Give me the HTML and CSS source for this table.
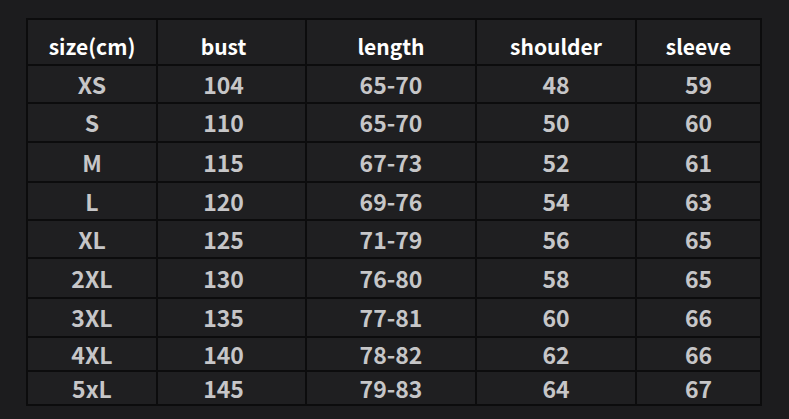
FILE: index.html
```html
<!DOCTYPE html>
<html>
<head>
<meta charset="utf-8">
<link rel="stylesheet" href="styles.css">
</head>
<body>
<div class="page">
<table class="chart">
  <colgroup>
    <col class="c1"><col class="c2"><col class="c3"><col class="c4"><col class="c5">
  </colgroup>
  <thead>
    <tr class="head"><th>size(cm)</th><th class="bust">bust</th><th>length</th><th>shoulder</th><th>sleeve</th></tr>
  </thead>
  <tbody>
    <tr class="r1"><td>XS</td><td class="bust">104</td><td>65-70</td><td>48</td><td>59</td></tr>
    <tr class="r2"><td>S</td><td class="bust">110</td><td>65-70</td><td>50</td><td>60</td></tr>
    <tr class="r3"><td>M</td><td class="bust">115</td><td>67-73</td><td>52</td><td>61</td></tr>
    <tr class="r4"><td>L</td><td class="bust">120</td><td>69-76</td><td>54</td><td>63</td></tr>
    <tr class="r5"><td>XL</td><td class="bust">125</td><td>71-79</td><td>56</td><td>65</td></tr>
    <tr class="r6"><td>2XL</td><td class="bust">130</td><td>76-80</td><td>58</td><td>65</td></tr>
    <tr class="r7"><td>3XL</td><td class="bust">135</td><td>77-81</td><td>60</td><td>66</td></tr>
    <tr class="r8"><td>4XL</td><td class="bust">140</td><td>78-82</td><td>62</td><td>66</td></tr>
    <tr class="r9"><td>5xL</td><td class="bust">145</td><td>79-83</td><td>64</td><td>67</td></tr>
  </tbody>
</table>
</div>
</body>
</html>
```

FILE: styles.css
```css
html, body {
  margin: 0;
  padding: 0;
  background: #1c1c1e;
  width: 789px;
  height: 419px;
  overflow: hidden;
}
.page {
  padding: 18px 0 0 26px;
}
.chart {
  border-collapse: collapse;
  table-layout: fixed;
  width: 734px;
  background: #1f1f21;
  font-family: "Noto Sans CJK SC", "Noto Sans", sans-serif;
  font-weight: 700;
}
.chart th, .chart td {
  border: 2px solid #0c0c0d;
  text-align: center;
  padding: 0;
  line-height: 1;
  box-sizing: border-box;
}
.c1 { width: 130px; }
.c2 { width: 149px; }
.c3 { width: 170px; }
.c4 { width: 160px; }
.c5 { width: 125px; }
.chart th {
  color: #ffffff;
  font-size: 21px;
  height: 46px;
  padding-top: 8px;
}
.chart td {
  color: #c6c6c8;
  font-size: 23px;
}
.chart .bust { padding-right: 16px; }
.r1 td { height: 38px; }
.r2 td { height: 39px; }
.r3 td { height: 40px; }
.r4 td { height: 38px; }
.r5 td { height: 38px; }
.r6 td { height: 40px; }
.r7 td { height: 39px; }
.r8 td { height: 34px; }
.r9 td { height: 34px; }
```
